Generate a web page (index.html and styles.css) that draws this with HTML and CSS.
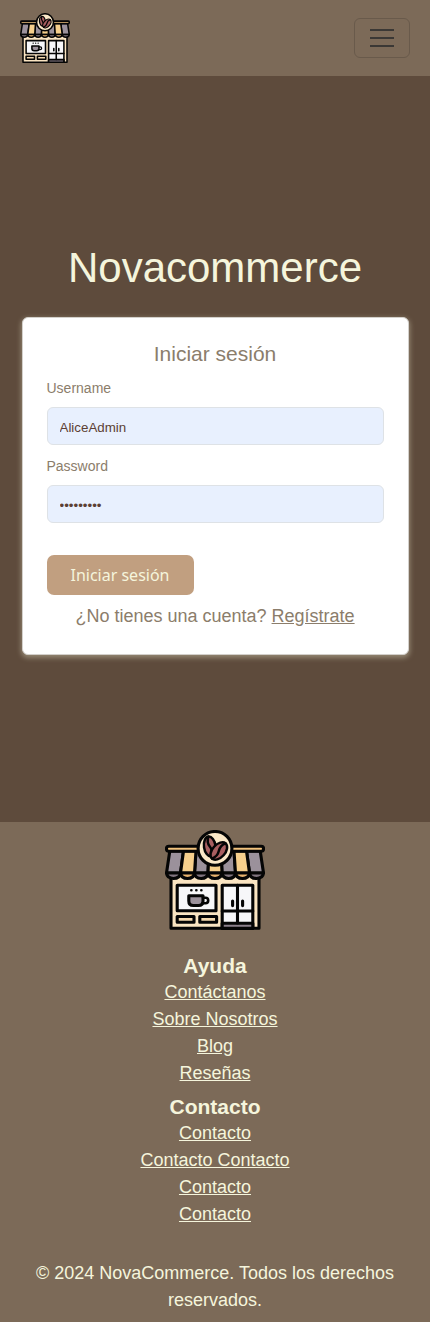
FILE: index.html
```html
<!DOCTYPE html>
<html lang="es">
<head>
<meta charset="utf-8">
<title>Novacommerce</title>
<link rel="stylesheet" href="styles.css">
</head>
<body>
<svg class="defs" width="0" height="0" aria-hidden="true">
  <symbol id="shop" viewBox="0 0 100 100">
    <g stroke="#050505" stroke-width="3.1" stroke-linejoin="round" stroke-linecap="round">
      <path fill="#fbe5c2" d="M6 45V98.3H94V45Z"/>
      <path fill="#f7f7f9" d="M12.2 55.2H51V80.8H12.2Z"/>
      <path fill="#f5d9ae" d="M12.2 86.5H29V92.3H12.2ZM34.8 86.5H51.6V92.3H34.8Z"/>
      <path fill="#f7f7f9" d="M57.2 55.2H87.8V98.3H57.2Z"/>
      <path fill="#8c818c" d="M57.2 93.2H87.8V98.3H57.2Z"/>
      <path fill="none" d="M72.5 55.2V93M57.2 81H87.8M67.6 71V75.600M77.6 71V75.600"/>
      <path fill="#9b919b" d="M23.8 65.8H38V71Q38 75.5 33.500 75.5H28.3Q23.8 75.5 23.8 71Z"/>
      <path fill="none" stroke-width="2.6" d="M38 67.8H40.5Q43.2 67.8 43.2 70.5T40.5 73.2H37.5M26.3 60.3H26.4M31.3 60.3H31.4M36.3 60.3H36.4"/>
      <path fill="#9b919b" d="M4.8 21H18.5L15.5 43H1.5ZM31 21H44L43 43H29.5ZM56 21H69L70.5 43H57ZM81.5 21H95.2L98.5 43H84.5Z"/>
      <path fill="#f6cf8c" d="M18.5 21H31L29.5 43H15.5ZM44 21H56L57 43H43ZM69 21H81.5L84.5 43H70.5Z"/>
      <path fill="#81747f" d="M1.5 43H15.5Q15 48.5 8.5 48.5T1.5 43ZM29.5 43H43Q42.5 48.5 36.2 48.5T29.5 43ZM57 43H70.5Q70 48.5 63.8 48.5T57 43ZM84.5 43H98.5Q98 48.5 91.5 48.5T84.5 43Z"/>
      <path fill="#e8b36e" d="M15.5 43H29.5Q29 48.5 22.5 48.5T15.5 43ZM43 43H57Q56.5 48.5 50 48.5T43 43ZM70.5 43H84.5Q84 48.5 77.5 48.5T70.5 43Z"/>
      <rect fill="#f1c27d" x="1.500" y="16.200" width="97" height="5" rx="2.200"/>
      <circle fill="#fbe8c8" cx="50" cy="18.400" r="16.900"/>
      <g fill="#a85e60" stroke-width="2.500">
        <g transform="rotate(-8 44.800 16.500)">
          <ellipse cx="44.800" cy="16.500" rx="5.800" ry="10"/>
          <path fill="none" d="M44.800 6.500Q42 12 44.800 16.500T44.800 26.500"/>
        </g>
        <g transform="rotate(42 53.800 21)">
          <ellipse cx="53.800" cy="21" rx="6.400" ry="10.200"/>
          <path fill="none" d="M53.800 10.800Q51 16 53.800 21T53.800 31.200"/>
        </g>
      </g>
    </g>
  </symbol>
</svg>

<header class="navbar">
  <svg class="navbar-logo" role="img" aria-label="Novacommerce"><use href="#shop"/></svg>
  <button class="navbar-toggler" type="button" aria-label="Menú">
    <svg width="24" height="18" viewBox="0 0 24 18"><path d="M0 1H24M0 9H24M0 17H24" stroke="#3b3835" stroke-width="2"/></svg>
  </button>
</header>

<main class="login">
  <h1 class="login-title">Novacommerce</h1>
  <form class="card">
    <h2 class="card-title">Iniciar sesión</h2>
    <label class="label" for="username">Username</label>
    <input class="field" id="username" type="text" value="AliceAdmin">
    <label class="label" for="password">Password</label>
    <input class="field" id="password" type="password" value="alice1234">
    <button class="submit" type="button">Iniciar sesión</button>
    <p class="register">¿No tienes una cuenta? <a href="#">Regístrate</a></p>
  </form>
</main>

<footer class="footer">
  <svg class="footer-logo" role="img" aria-label="Novacommerce"><use href="#shop"/></svg>
  <section class="footer-group">
    <h3>Ayuda</h3>
    <a href="#">Contáctanos</a>
    <a href="#">Sobre Nosotros</a>
    <a href="#">Blog</a>
    <a href="#">Reseñas</a>
  </section>
  <section class="footer-group">
    <h3>Contacto</h3>
    <a href="#">Contacto</a>
    <a href="#">Contacto Contacto</a>
    <a href="#">Contacto</a>
    <a href="#">Contacto</a>
  </section>
  <p class="copyright">© 2024 NovaCommerce. Todos los derechos reservados.</p>
</footer>
</body>
</html>
```

FILE: styles.css
```css
* {
  box-sizing: border-box;
}

body {
  margin: 0;
  background: #5e4b3c;
  color: #f5f5dc;
  font: 18px/27px "Liberation Sans", Arial, sans-serif;
}

h1, h2, h3, p {
  margin: 0;
}

a {
  color: inherit;
}

.defs {
  display: block;
}

.navbar {
  display: flex;
  align-items: center;
  justify-content: space-between;
  height: 76px;
  padding: 0 20px;
  background: #7c6a58;
}

.navbar-logo {
  width: 50px;
  height: 50px;
}

.navbar-toggler {
  display: flex;
  align-items: center;
  justify-content: center;
  width: 56px;
  height: 40px;
  padding: 0;
  background: transparent;
  border: 1px solid #695a4b;
  border-radius: 6px;
}

.login {
  display: flex;
  flex-direction: column;
  justify-content: center;
  height: 746px;
  padding: 0 21.5px;
}

.login-title {
  margin-bottom: 24px;
  font-size: 42px;
  font-weight: 400;
  line-height: 50px;
  text-align: center;
}

.card {
  display: flex;
  flex-direction: column;
  height: 338px;
  padding: 24px 24px 0;
  background: #fff;
  border: 1px solid #d3d0cb;
  border-radius: 6px;
  box-shadow: 0 2px 5px 1px #948773;
  color: #8b7d6b;
}

.card-title {
  font-size: 21px;
  font-weight: 400;
  line-height: 23px;
  text-align: center;
}

.label {
  margin-bottom: 8px;
  font-size: 14px;
  line-height: 21px;
}

.card-title + .label {
  margin-top: 13px;
}

.field {
  width: 100%;
  height: 38px;
  margin: 0 0 11px;
  padding: 3px 12px 0;
  background: #e8f0fe;
  border: 1px solid #dee2e6;
  border-radius: 6px;
  color: #5c4033;
  font: 13.333px "Liberation Sans", Arial, sans-serif;
}

.submit {
  align-self: flex-start;
  width: 147px;
  height: 40px;
  margin-top: 21px;
  padding: 0;
  background: #c19f80;
  border: 0;
  border-radius: 7px;
  color: #f5f5dc;
  font: 16px/24px "Noto Sans", sans-serif;
}

.register {
  margin-top: 8px;
  text-align: center;
}

.footer {
  display: flex;
  flex-direction: column;
  align-items: center;
  height: 500px;
  padding-top: 8px;
  background: #7c6a58;
}

.footer-logo {
  width: 100px;
  height: 100px;
  margin-bottom: 24px;
}

.footer-group {
  display: flex;
  flex-direction: column;
  align-items: center;
  margin-bottom: 8px;
}

.footer-group h3 {
  margin-bottom: 2px;
  font-size: 21px;
  line-height: 23px;
}

.copyright {
  padding: 24px 12px 0;
  text-align: center;
}
```
